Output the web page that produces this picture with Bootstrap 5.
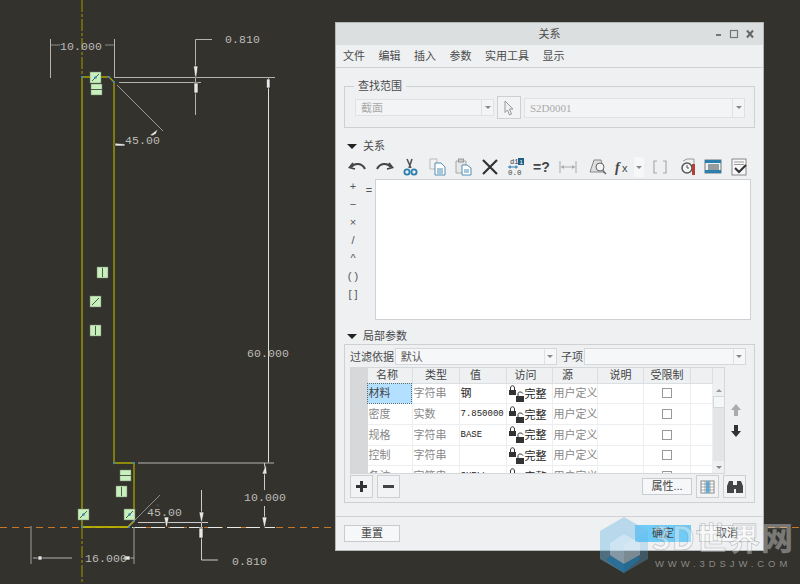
<!DOCTYPE html>
<html lang="zh-CN">
<head>
  <meta charset="UTF-8" />
  <meta name="viewport" content="width=device-width, initial-scale=1.0"/>
  <title>关系</title>
  <link href="https://cdn.jsdelivr.net/npm/bootstrap@5.3.2/dist/css/bootstrap.min.css" rel="stylesheet">
  <style>
    body {
      margin: 0;
      background: #33322d;
      overflow: hidden;
    }

    .cad-stage {
      position: relative;
      width: 800px;
      height: 584px;
      overflow: hidden;
      background: #33322d;
    }

    .cad-drawing {
      position: absolute;
      left: 0;
      top: 0;
    }

    .cad-drawing text {
      font-family: "Liberation Mono", monospace;
      font-size: 11.5px;
      letter-spacing: 0.1px;
      fill: #bdbdb8;
    }

    /* dialog window */
    .rel-dialog {
      position: absolute;
      left: 335px;
      top: 22px;
      width: 429px;
      height: 529px;
      background: #eef0f2;
      border: 1px solid #b4b7b8;
      font-family: "Liberation Sans", "Noto Sans CJK SC", sans-serif;
      font-size: 11px;
      line-height: 14px;
      color: #4a4a4a;
    }

    .rel-title {
      height: 22px;
      background: #dcdfe0;
      position: relative;
    }

    .rel-winbtns {
      position: absolute;
      right: 5px;
      top: 5px;
    }

    .rel-menu {
      height: 23px;
      padding-left: 7px;
      gap: 13.5px;
      border-bottom: 1px solid #d0d3d5;
    }

    .rel-body {
      padding: 0 8px;
    }

    .rel-group {
      margin: 11px 0 0;
      height: 49px;
      border: 1px solid #ced1d3;
      padding: 3px 9px 0 10px;
      min-width: 0;
    }

    .rel-group legend {
      float: none;
      width: auto;
      margin: 0 0 0 -1px;
      padding: 0 4px;
      font-size: 11px;
      line-height: 14px;
    }

    .rel-scope-row {
      gap: 3px;
    }

    .rel-combo {
      height: 17px;
      background: #f3f4f5;
      border: 1px solid #dfe1e3;
      color: #aaa;
      padding-left: 5px;
    }

    .rel-combo-arrow {
      width: 12px;
      height: 100%;
      margin-left: auto;
      border-left: 1px solid #dfe1e3;
      color: #999;
    }

    .rel-tri {
      width: 0;
      height: 0;
      border-left: 5px solid transparent;
      border-right: 5px solid transparent;
      border-top: 5px solid #222;
    }

    .rel-tri-sm {
      width: 0;
      height: 0;
      border-left: 3px solid transparent;
      border-right: 3px solid transparent;
      border-top: 3px solid #888;
    }

    .rel-tri-up {
      width: 0;
      height: 0;
      border-left: 3px solid transparent;
      border-right: 3px solid transparent;
      border-bottom: 3px solid #999;
    }

    .rel-section {
      height: 14px;
      padding-left: 3px;
      gap: 6px;
    }

    .rel-tools {
      height: 20px;
      margin-top: 4px;
      padding-left: 4px;
      gap: 6px;
    }

    .rel-tool-nudge {
      margin-left: 2px;
    }

    .rel-ops {
      width: 31px;
      margin-top: -2px;
    }

    .rel-op {
      width: 18px;
      height: 18px;
      text-align: center;
      line-height: 18px;
      color: #555;
      font-family: "Liberation Sans", sans-serif;
      font-size: 11px;
    }

    .rel-op-eq {
      width: 12px;
      margin-left: -12px;
      margin-top: 2px;
    }

    .rel-editor {
      width: 376px;
      height: 141px;
      background: #fff;
      border: 1px solid #cfd2d4;
    }

    .rel-params {
      height: 159px;
      margin-top: 1px;
      border: 1px solid #ced1d3;
      padding: 3px 8px 0 5px;
    }

    .rel-filter {
      height: 17px;
      white-space: nowrap;
    }

    .rel-select {
      height: 17px;
      background: #f6f7f8;
      border: 1px solid #d5d8da;
      color: #555;
      padding-left: 5px;
    }

    .rel-table-wrap {
      width: 376px;
      height: 107px;
      margin-top: 2px;
      border: 1px solid #d5d8da;
      background: #fff;
      overflow: hidden;
    }

    .rel-grid {
      width: 361px;
      flex: none;
      table-layout: fixed;
      margin: 0;
      font-size: 11px;
      --bs-table-bg: transparent;
    }

    .rel-grid th,
    .rel-grid td {
      height: 20.7px;
      padding: 0 0 0 1px;
      vertical-align: middle;
      border-color: #eceeef;
      border-width: 0 1px 1px 0;
      white-space: nowrap;
      overflow: hidden;
      color: #888;
      font-weight: 400;
    }

    .rel-grid th {
      height: 15px;
      background: #eef0f2;
      color: #444;
      text-align: center;
      border-color: #dcdfe1;
    }

    /* header labels in the picture sit left of their cell centre */
    .rel-grid th.rel-th-a { padding-right: 6px; }
    .rel-grid th.rel-th-b { padding-right: 8px; }
    .rel-grid th.rel-th-c { padding-right: 15px; }

    .rel-grid .rel-gutter {
      background: #d6d8d9;
      border-color: #d6d8d9;
    }

    .rel-grid td.rel-active {
      background: #b3e0ff;
      outline: 1px dotted #44708c;
      outline-offset: -1px;
      color: #444;
    }

    .rel-grid td.rel-dark {
      color: #222;
    }

    .rel-grid td.rel-val {
      color: #222;
      font-family: "Liberation Mono", monospace;
      font-size: 9px;
    }

    .rel-check {
      display: block;
      width: 10px;
      height: 10px;
      margin: 0 auto;
      border: 1px solid #999;
      background: #fff;
    }

    .rel-lock {
      vertical-align: -4px;
    }

    .rel-scroll {
      width: 13px;
      flex: none;
      height: 100%;
      background: #e3e5e6;
    }

    .rel-scroll-head {
      height: 16px;
      background: #eef0f2;
    }

    .rel-scroll-end {
      height: 12px;
      background: #eef0f2;
    }

    .rel-scroll-thumb {
      height: 12px;
      background: #f5f6f7;
      border: 1px solid #d5d8da;
    }

    .rel-updown {
      width: 21px;
      padding-top: 38px;
      gap: 7px;
    }

    .rel-sqbtn {
      width: 23px;
      height: 23px;
      background: #f2f3f4;
      border: 1px solid #cdd0d2;
    }

    .rel-sqbtn-wide {
      width: 24px;
    }

    .rel-btn {
      height: 17px;
      background: #f6f7f8;
      border: 1px solid #c9ccce;
      color: #444;
      font-size: 11px;
      line-height: 15px;
      text-align: center;
    }

    .rel-foot {
      margin-top: 13px;
      border-top: 1px solid #d0d3d5;
      padding: 8px 8px 0;
    }

    .rel-btn-ok {
      background: #6fcbf8;
      border-color: #6fcbf8;
    }

    .rel-watermark {
      position: absolute;
      left: 0;
      top: 0;
      pointer-events: none;
    }

    .rel-watermark .wm-big {
      font-family: "Noto Sans CJK SC", sans-serif;
      font-size: 32px;
      font-weight: 700;
      letter-spacing: 0.8px;
      fill: #fff;
      fill-opacity: 0.35;
      stroke: #8d9294;
      stroke-width: 0.6;
      stroke-opacity: 0.6;
    }

    .rel-watermark .wm-small {
      font-family: "Liberation Sans", sans-serif;
      font-size: 9.5px;
      letter-spacing: 3.9px;
      fill: #8a8a85;
    }
  </style>
</head>
<body>
  <svg width="0" height="0" class="d-none">
    <symbol id="lock-pair" viewBox="0 0 17 17">
      <rect x="1" y="5" width="7" height="5" fill="#333"/>
      <path d="M2.500 5V3C2.500 0 6.500 0 6.500 3V5" fill="none" stroke="#333"/>
      <rect x="8" y="11" width="8" height="6" fill="#333"/>
      <path d="M10 11V8.500C10 6.500 14 6.500 15 8.500" fill="none" stroke="#333"/>
    </symbol>
  </svg>

  <div class="cad-stage">

    <!-- sketch behind the dialog -->
    <svg class="cad-drawing" width="800" height="584" viewBox="0 0 800 584" fill="none">
      <!-- centerlines -->
      <path d="M82 0V77M82 527V584" stroke="#8f8a00" stroke-width="1.2" stroke-dasharray="12 2 3 2"/>
      <path d="M0 527.5H800" stroke="#c8762c" stroke-width="1" stroke-dasharray="7 5"/>
      <path d="M132 527.5H275" stroke="#e8e8e4" stroke-width="1" stroke-dasharray="14 5"/>

      <!-- profile -->
      <path d="M82 527V77H109L114 82V463H134V521L128 527H82Z" stroke="#a8a400" stroke-width="1.3"/>
      <path d="M82 527H128L134 521" stroke="#cfc800" stroke-width="1.2"/>
      <path d="M114 463H134" stroke="#8f8c10" stroke-width="1.6"/>
      <g fill="#3f87b5">
        <rect x="81" y="76" width="2" height="2"/><rect x="108" y="76" width="2" height="2"/>
        <rect x="113" y="81" width="2" height="2"/><rect x="113" y="462" width="2" height="2"/>
        <rect x="133" y="462" width="2" height="2"/><rect x="133" y="520" width="2" height="2"/>
        <rect x="128" y="526" width="2" height="2"/><rect x="81" y="526" width="2" height="2"/>
      </g>

      <!-- dimensions -->
      <g stroke="#b4b4ae" stroke-width="1">
        <path d="M50.5 39V78M114.5 39V78"/>
        <path d="M51 45H60M105 45H114" stroke="#888"/>
        <path d="M114 77.5H275" stroke-width="1.2"/>
        <path d="M119 82.5H201" stroke-width="1.2"/>
        <path d="M212 39.5H195.5V115"/>
        <path d="M117 85L163 131" stroke="#999"/>
        <path d="M115 145H125"/>
        <path d="M268.5 78V463" stroke="#e0e0dc"/>
        <path d="M138 463H274" stroke="#8a8a84" stroke-width="1.6"/>
        <path d="M264.5 463V490M264.5 506V527" stroke="#ccc"/>
        <path d="M201.5 490V560H218" stroke="#ccc"/>
        <path d="M138 522.500H208" stroke="#ccc"/>
        <path d="M128 527L160 495" stroke="#8f8f8a"/>
        <path d="M31 526V564M134 527V564" stroke="#808080" stroke-width="1.4"/>
        <path d="M33 558H72" stroke="#888" stroke-width="1.4"/>
        <path d="M123 558H134" stroke="#aaa"/>
      </g>
      <g fill="#e8e8e4" stroke="#222" stroke-width="0.6">
        <path d="M193.500 66H198L196.500 77H195Z"/>
        <path d="M194 83H198V93H194Z"/>
        <path d="M266.500 79L270 79V88H266.500Z"/>
        <path d="M150 135L158 129L156 134L152 136Z"/>
        <path d="M115 146V143L125 144V146Z"/>
        <path d="M266 464L262 474H267Z"/>
        <path d="M262 517H267L265 527H264Z"/>
        <path d="M199 512H204L202 522H201Z"/>
        <path d="M164 517H169L167 527H166Z"/>
        <path d="M199 528H203V538H199Z"/>
        <path d="M157 505L161 508L156 503Z"/>
        <path d="M38 556H42V560H38Z"/>
        <path d="M124 556H130V560H124Z"/>
      </g>
      <text x="60" y="50">10.000</text>
      <text x="225" y="43">0.810</text>
      <text x="125" y="144">45.00</text>
      <text x="247" y="357">60.000</text>
      <text x="244" y="501">10.000</text>
      <text x="147" y="516">45.00</text>
      <text x="85" y="562">16.000</text>
      <text x="232" y="565">0.810</text>

      <!-- constraint symbols -->
      <g fill="#c8f0bc" stroke="#6f7f6c" stroke-width="0.5">
        <rect x="90" y="72" width="11" height="11"/>
        <rect x="91" y="84" width="11" height="11"/>
        <rect x="97" y="267" width="11" height="11"/>
        <rect x="90" y="296" width="11" height="11"/>
        <rect x="90" y="325" width="11" height="11"/>
        <rect x="120" y="470" width="11" height="11"/>
        <rect x="116" y="486" width="11" height="11"/>
        <rect x="78" y="509" width="11" height="11"/>
        <rect x="124" y="509" width="11" height="11"/>
      </g>
      <g stroke="#4d5a4c" stroke-width="1">
        <path d="M92 81L99 74M91 89.500H102M102.500 268V277M92 305L99 298M95.500 326V335M120 475.500H131M121.500 487V496M80 518L87 511M126 518L133 511"/>
      </g>
      <g fill="#3f87b5"><circle cx="95.500" cy="77.500" r="1.300"/><circle cx="83.500" cy="514.500" r="1.300"/><circle cx="129.500" cy="514.500" r="1.300"/></g>
    </svg>

    <!-- relations dialog -->
    <div class="rel-dialog">
      <div class="rel-title d-flex align-items-center justify-content-center">
        <span>关系</span>
        <svg class="rel-winbtns" width="48" height="12" viewBox="0 0 48 12" fill="none">
          <path d="M6 7H11" stroke="#777" stroke-width="2"/>
          <rect x="20.500" y="2.500" width="7" height="7" stroke="#777" stroke-width="1.200"/>
          <path d="M37 2.500L43 9.500M43 2.500L37 9.500" stroke="#666" stroke-width="2"/>
        </svg>
      </div>
      <div class="rel-menu d-flex align-items-center">
        <span>文件</span><span>编辑</span><span>插入</span><span>参数</span><span>实用工具</span><span>显示</span>
      </div>

      <div class="rel-body">
        <fieldset class="rel-group">
          <legend>查找范围</legend>
          <div class="rel-scope-row d-flex align-items-center">
            <div class="rel-combo d-flex align-items-center" style="width: 139px">截面<span class="rel-combo-arrow d-flex align-items-center justify-content-center"><span class="rel-tri-sm"></span></span></div>
            <div class="rel-sqbtn rel-sqbtn-wide d-flex align-items-center justify-content-center">
              <svg width="12" height="16" viewBox="0 0 12 16" fill="#eef0f2" stroke="#999"><path d="M2 1L10 9H6.500L8.500 14L6.500 15L4.500 10L2 12.500Z"/></svg>
            </div>
            <div class="rel-combo d-flex align-items-center" style="width: 221px; height: 20px; font-family: 'Liberation Serif', serif">S2D0001<span class="rel-combo-arrow d-flex align-items-center justify-content-center"><span class="rel-tri-sm"></span></span></div>
          </div>
        </fieldset>

        <div class="rel-section d-flex align-items-center" style="margin-top: 11px"><span class="rel-tri"></span><span>关系</span></div>

        <div class="rel-tools d-flex align-items-center">
          <!-- undo -->
          <svg width="20" height="18" viewBox="0 0 20 18" fill="none"><path d="M5 5L1.500 9.500L7 11" stroke="#444" stroke-width="1.800"/><path d="M3 9C7 4.500 14 5 17 11" stroke="#444" stroke-width="2"/></svg>
          <!-- redo -->
          <svg width="20" height="18" viewBox="0 0 20 18" fill="none"><path d="M15 5L18.500 9.500L13 11" stroke="#444" stroke-width="1.800"/><path d="M17 9C13 4.500 6 5 3 11" stroke="#444" stroke-width="2"/></svg>
          <!-- scissors -->
          <svg width="20" height="18" viewBox="0 0 20 18" fill="none"><path d="M7 1L11 10M12 1L9 10" stroke="#555" stroke-width="1.600"/><circle cx="7" cy="14" r="2.600" stroke="#2a7fae" stroke-width="1.800"/><circle cx="14" cy="14" r="2.600" stroke="#2a7fae" stroke-width="1.800"/></svg>
          <!-- copy -->
          <svg class="rel-tool-nudge" width="20" height="18" viewBox="0 0 20 18" fill="none"><path d="M2 1H9V11H2Z" fill="#f2f2f2" stroke="#bbb"/><path d="M7 5H13L17 9V17H7Z" fill="#fff" stroke="#4f8fb3"/><path d="M9 11H15M9 13H15M9 15H15" stroke="#4f8fb3"/></svg>
          <!-- paste -->
          <svg width="20" height="18" viewBox="0 0 20 18" fill="none"><path d="M2 3H12V15H2Z" fill="#e8e8e8" stroke="#aaa"/><rect x="4.500" y="1" width="5" height="3" fill="#ccc" stroke="#999"/><path d="M8 7H13L17 10V17H8Z" fill="#fff" stroke="#4f8fb3"/><path d="M10 12H15M10 14H15" stroke="#4f8fb3"/></svg>
          <!-- delete -->
          <svg width="20" height="18" viewBox="0 0 20 18" fill="none"><path d="M3 2L17 16M17 2L3 16" stroke="#333" stroke-width="2.200"/></svg>
          <!-- d1 switch -->
          <svg width="20" height="18" viewBox="0 0 20 18" fill="none"><rect x="12" y="0" width="6" height="7" fill="#1f5f86"/><path d="M2 9H12M4 7.500V10.500M10 7.500V10.500" stroke="#2a7fae" stroke-width="1.200"/><text x="4" y="6" font-family="Liberation Mono" font-size="7" fill="#333">d1</text><text x="2" y="17" font-family="Liberation Mono" font-size="7.500" fill="#444">0.0</text><text x="13.500" y="6" font-family="Liberation Sans" font-size="6" fill="#fff">1</text></svg>
          <!-- =? -->
          <svg width="20" height="18" viewBox="0 0 20 18"><text x="1" y="14" font-family="Liberation Sans" font-size="14" font-weight="700" fill="#444">=?</text></svg>
          <!-- dimension, disabled -->
          <svg width="20" height="18" viewBox="0 0 20 18" fill="none"><path d="M2 3V15M18 3V15M3 9H17" stroke="#aaa"/><path d="M3 9L6 7V11ZM17 9L14 7V11Z" fill="#aaa"/></svg>
          <!-- sheet with stopwatch -->
          <svg class="ms-1" width="20" height="18" viewBox="0 0 20 18" fill="none"><path d="M2 14L6 2H13L16 14Z" fill="#ddd" stroke="#888"/><circle cx="12" cy="9" r="4" fill="#f4f4f4" stroke="#666"/><path d="M15 13L18 16" stroke="#666" stroke-width="1.500"/></svg>
          <!-- fx with arrow -->
          <svg width="20" height="18" viewBox="0 0 20 18"><text x="1" y="14" font-family="Liberation Serif" font-size="14" font-style="italic" font-weight="700" fill="#444">f</text><text x="8" y="14" font-family="Liberation Sans" font-size="11" fill="#444">x</text></svg>
          <span class="d-flex align-items-center justify-content-center" style="width: 10px; height: 20px; margin-left: -6px; background: #f6f7f8"><span class="rel-tri-sm"></span></span>
          <!-- brackets, disabled -->
          <svg class="rel-tool-nudge" width="16" height="18" viewBox="0 0 16 18" fill="none"><path d="M5 3H2V15H5M11 3H14V15H11" stroke="#aaa" stroke-width="1.200"/></svg>
          <!-- clock and bar -->
          <svg class="ms-1" width="20" height="18" viewBox="0 0 20 18" fill="none"><path d="M5 3L9 1H16V6" stroke="#999"/><circle cx="9" cy="10" r="5" fill="#f5f5f5" stroke="#555" stroke-width="1.500"/><path d="M9 7V10H11" stroke="#555"/><rect x="14" y="6" width="3" height="11" fill="#b5403a"/></svg>
          <!-- table icon -->
          <svg width="20" height="18" viewBox="0 0 20 18" fill="none"><rect x="1" y="2" width="16" height="13" fill="#e8f2f8" stroke="#777"/><rect x="1" y="2" width="16" height="3" fill="#2a7fae"/><rect x="1" y="12" width="16" height="3" fill="#2a7fae"/><path d="M4 7H15M4 9H15M4 11H15" stroke="#444"/></svg>
          <!-- checked sheet -->
          <svg width="20" height="18" viewBox="0 0 20 18" fill="none"><rect x="2" y="1" width="14" height="16" fill="#f8f8f8" stroke="#888"/><path d="M4 4H14M4 6.500H14" stroke="#999"/><path d="M5 10L9 14L16 7" stroke="#333" stroke-width="2"/></svg>
        </div>

        <div class="d-flex" style="margin-top: 2px">
          <div class="rel-ops d-flex flex-column">
            <div class="rel-op">+</div>
            <div class="rel-op">−</div>
            <div class="rel-op">×</div>
            <div class="rel-op">/</div>
            <div class="rel-op">^</div>
            <div class="rel-op">( )</div>
            <div class="rel-op">[ ]</div>
          </div>
          <div class="rel-op rel-op-eq">=</div>
          <div class="rel-editor"></div>
        </div>

        <div class="rel-section d-flex align-items-center" style="margin-top: 9px"><span class="rel-tri"></span><span>局部参数</span></div>

        <div class="rel-params">
          <div class="rel-filter d-flex align-items-center">
            <span style="width: 45px">过滤依据</span>
            <div class="rel-select d-flex align-items-center" style="width: 163px">默认<span class="rel-combo-arrow d-flex align-items-center justify-content-center"><span class="rel-tri-sm"></span></span></div>
            <span class="ms-1" style="width: 23px">子项</span>
            <div class="rel-select d-flex align-items-center" style="width: 163px"><span class="rel-combo-arrow d-flex align-items-center justify-content-center"><span class="rel-tri-sm"></span></span></div>
          </div>

          <div class="d-flex">
            <div class="rel-table-wrap d-flex">
              <table class="table rel-grid">
                <colgroup>
                  <col style="width: 16px"><col style="width: 45px"><col style="width: 47px"><col style="width: 47px"><col style="width: 46px"><col style="width: 45px"><col style="width: 46px"><col style="width: 47px"><col style="width: 22px">
                </colgroup>
                <thead>
                  <tr><th class="rel-gutter"></th><th class="rel-th-a">名称</th><th>类型</th><th class="rel-th-c">值</th><th class="rel-th-b">访问</th><th class="rel-th-c">源</th><th>说明</th><th>受限制</th><th></th></tr>
                </thead>
                <tbody>
                  <tr>
                    <td class="rel-gutter"></td><td class="rel-active">材料</td><td>字符串</td><td class="rel-dark">钢</td>
                    <td class="rel-dark"><svg class="rel-lock" width="17" height="17"><use href="#lock-pair"/></svg>完整</td>
                    <td>用户定义</td><td></td><td><span class="rel-check"></span></td><td></td>
                  </tr>
                  <tr>
                    <td class="rel-gutter"></td><td>密度</td><td>实数</td><td class="rel-val">7.850000</td>
                    <td class="rel-dark"><svg class="rel-lock" width="17" height="17"><use href="#lock-pair"/></svg>完整</td>
                    <td>用户定义</td><td></td><td><span class="rel-check"></span></td><td></td>
                  </tr>
                  <tr>
                    <td class="rel-gutter"></td><td>规格</td><td>字符串</td><td class="rel-val">BASE</td>
                    <td class="rel-dark"><svg class="rel-lock" width="17" height="17"><use href="#lock-pair"/></svg>完整</td>
                    <td>用户定义</td><td></td><td><span class="rel-check"></span></td><td></td>
                  </tr>
                  <tr>
                    <td class="rel-gutter"></td><td>控制</td><td>字符串</td><td></td>
                    <td class="rel-dark"><svg class="rel-lock" width="17" height="17"><use href="#lock-pair"/></svg>完整</td>
                    <td>用户定义</td><td></td><td><span class="rel-check"></span></td><td></td>
                  </tr>
                  <tr>
                    <td class="rel-gutter"></td><td>备注</td><td>字符串</td><td class="rel-val">SHELL</td>
                    <td class="rel-dark"><svg class="rel-lock" width="17" height="17"><use href="#lock-pair"/></svg>完整</td>
                    <td>用户定义</td><td></td><td><span class="rel-check"></span></td><td></td>
                  </tr>
                </tbody>
              </table>
              <div class="rel-scroll d-flex flex-column">
                <div class="rel-scroll-head"></div>
                <div class="rel-scroll-end d-flex align-items-center justify-content-center"><span class="rel-tri-up"></span></div>
                <div class="rel-scroll-thumb"></div>
                <div class="rel-scroll-end d-flex align-items-center justify-content-center mt-auto"><span class="rel-tri-sm"></span></div>
              </div>
            </div>
            <div class="rel-updown d-flex flex-column align-items-center">
              <svg width="12" height="14" viewBox="0 0 12 14" fill="#a8abad"><path d="M6 1L11 7H8V13H4V7H1Z"/></svg>
              <svg width="12" height="14" viewBox="0 0 12 14" fill="#333"><path d="M6 13L11 7H8V1H4V7H1Z"/></svg>
            </div>
          </div>

          <div class="d-flex align-items-start" style="margin-top: 1px">
            <div class="rel-sqbtn d-flex align-items-center justify-content-center">
              <svg width="13" height="13" viewBox="0 0 13 13" fill="#333"><path d="M5 1H8V5H12V8H8V12H5V8H1V5H5Z"/></svg>
            </div>
            <div class="rel-sqbtn d-flex align-items-center justify-content-center ms-1">
              <svg width="13" height="13" viewBox="0 0 13 13" fill="#444"><rect x="1" y="5" width="11" height="3"/></svg>
            </div>
            <div class="rel-btn ms-auto" style="width: 50px; margin-top: 3px">属性...</div>
            <div class="rel-sqbtn d-flex align-items-center justify-content-center ms-1">
              <svg width="15" height="14" viewBox="0 0 15 14" fill="none"><rect x="1" y="1" width="13" height="12" fill="#fff" stroke="#888"/><rect x="6" y="1" width="3.500" height="12" fill="#55b4e6"/><path d="M1 4H14M1 7H14M1 10H14M5 1V13M10 1V13" stroke="#888" stroke-width="0.700"/></svg>
            </div>
            <div class="rel-sqbtn d-flex align-items-center justify-content-center ms-1">
              <svg width="18" height="16" viewBox="0 0 18 16" fill="#444"><path d="M3 2H7V6H8V14H1V7Z"/><path d="M15 2H11V6H10V14H17V7Z"/><rect x="7" y="6" width="4" height="4"/></svg>
            </div>
          </div>
        </div>
      </div>

      <div class="rel-foot d-flex align-items-center">
        <div class="rel-btn" style="width: 56px">重置</div>
        <div class="rel-btn rel-btn-ok ms-auto" style="width: 56px">确定</div>
        <div class="rel-btn ms-2" style="width: 56px">取消</div>
      </div>
    </div>

    <!-- site watermark sits over everything -->
    <svg class="rel-watermark" width="800" height="584" viewBox="0 0 800 584" fill="none">
      <path d="M624 517L648 531V559L624 573L600 559V531Z" fill="#5fb2e0" fill-opacity="0.3"/>
      <path d="M624 517L600 531V559L624 573L624 545L648 531Z" fill="#8cc9ea" fill-opacity="0.2"/>
      <path d="M624 534L640 543V555L624 564L610 555V543Z" fill="#fff" fill-opacity="0.3"/>
      <path d="M610 556L624 564L638 556L640 559L624 573L606 560Z" fill="#1f6f9e" fill-opacity="0.8"/>
      <text class="wm-big" x="652" y="550">3D世界网</text>
      <text class="wm-small" x="655" y="567">WWW.3DSJW.COM</text>
    </svg>
  </div>

  <script src="https://cdn.jsdelivr.net/npm/bootstrap@5.3.2/dist/js/bootstrap.bundle.min.js"></script>
</body>
</html>
